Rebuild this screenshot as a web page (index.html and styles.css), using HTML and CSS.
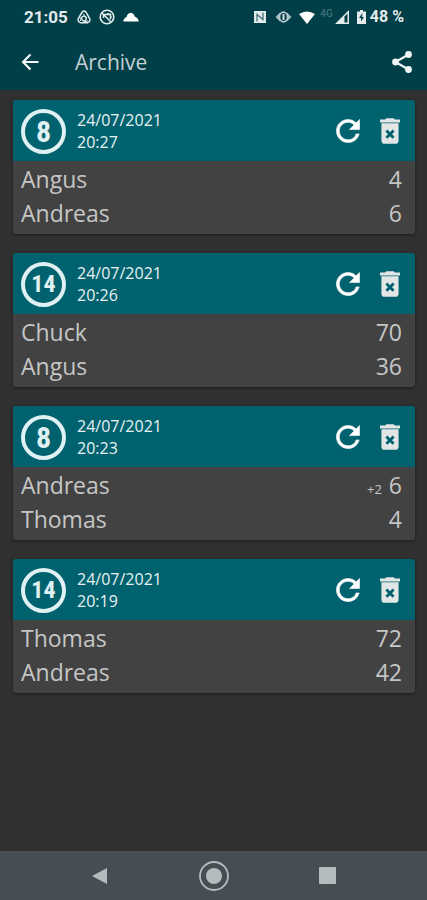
FILE: index.html
```html
<!DOCTYPE html>
<html lang="en">
<head>
<meta charset="utf-8">
<meta name="viewport" content="width=device-width, initial-scale=1">
<title>Archive</title>
<link rel="stylesheet" href="styles.css">
</head>
<body>
<svg class="defs" aria-hidden="true">
  <symbol id="refresh" viewBox="3.700 3.700 16.600 16.600"><path d="M17.650 6.350A7.958 7.958 0 0 0 12 4c-4.420 0-7.990 3.580-7.990 8s3.570 8 7.990 8c3.730 0 6.840-2.550 7.730-6h-2.080A5.990 5.990 0 0 1 12 18c-3.310 0-6-2.690-6-6s2.690-6 6-6c1.660 0 3.140.69 4.220 1.780L13 11h7V4z" fill="currentColor" stroke="currentColor" stroke-width=".4"/></symbol>
  <symbol id="trash" viewBox="5 3 14 18"><path d="M6 19c0 1.100.9 2 2 2h8c1.100 0 2-.9 2-2V6.500H6zm2.800-6.600 1.410-1.410L12 12.790l1.790-1.800 1.410 1.410-1.790 1.800 1.790 1.790-1.410 1.410L12 15.610l-1.790 1.790-1.410-1.410 1.790-1.790zM15.500 4l-1-1h-5l-1 1H5v2h14V4z" fill="currentColor"/></symbol>
</svg>
<header class="top">
  <div class="status">
    <span class="clock">21:05</span>
    <svg width="14" height="14" viewBox="0 0 14 14"><path d="M5 2.200Q7 0 9 2.200L12.400 8Q14 11.500 10.500 12.700H3.500Q0 11.500 1.600 8z" fill="none" stroke="currentColor" stroke-width="1.500"/><circle cx="7" cy="8.500" r="2.300" fill="none" stroke="currentColor" stroke-width="1.300"/><path d="M6 3.500 9.500 9M4 7l-.5 4M6 12l5-1" stroke="currentColor"/></svg>
    <svg width="16" height="16" viewBox="0 0 16 16"><circle cx="8" cy="8" r="6.800" fill="none" stroke="currentColor" stroke-width="1.600"/><path d="M3 4 12 13M4.500 9V5.500H11.500V9M8 5a3 3 0 0 1 3 5" fill="none" stroke="currentColor" stroke-width="1.500"/></svg>
    <svg class="cloud" width="16" height="10" viewBox="0 0 16 10"><path d="M.3 9.500Q.5 6 3.500 5 4.500 1.200 7.500.8q3 0 4.300 3.700Q15.500 6 15.700 9.500z" fill="#fff"/></svg>
    <span class="spacer"></span>
    <svg class="nfc" width="14" height="14" viewBox="0 0 14 14"><path d="M1 1h12v12H1z" fill="currentColor"/><path d="M4 11.500V4.500l6 5V2.500" fill="none" stroke="#46747b" stroke-width="1.300"/></svg>
    <svg class="eye" width="17" height="12" viewBox="0 0 17 12"><path d="M.5 6 5 1.500v9zM16.500 6 12 1.500v9z" fill="#a5bcc3"/><ellipse cx="8.500" cy="6" rx="4" ry="4.900" fill="none" stroke="#b9cbd0" stroke-width="1.600"/><path d="M8.500 3v6" stroke="#d5dfe2" stroke-width="2"/></svg>
    <svg class="wifi" width="16" height="13" viewBox="0 0 16 13"><path d="M0 3Q8-2 16 3L8 13z" fill="currentColor"/></svg>
    <span class="network">4G</span>
    <svg class="signal" width="14" height="14" viewBox="0 0 14 14"><path d="M0 14 14 0v14z" fill="currentColor"/><path d="M9.500 6.500 12.500 3.500v9h-3z" fill="#003f47"/></svg>
    <svg class="battery" width="9" height="14" viewBox="0 0 9 14"><path d="M3 0h3v1.500h3V14H0V1.500h3z" fill="currentColor"/><path d="M5.500 3 2 8h2v3.500L7 7H5z" fill="#003f47"/></svg>
    <span class="percent">48 %</span>
  </div>
  <div class="bar">
    <button class="icon" aria-label="Back"><svg width="18" height="18" viewBox="0 0 18 18"><path d="M17.500 9H2M9.500 1.500 2 9l7.500 7.500" fill="none" stroke="currentColor" stroke-width="2.200"/></svg></button>
    <h1>Archive</h1>
    <button class="icon" aria-label="Share"><svg width="20" height="22" viewBox="0 0 20 22"><path d="M16.500 3.500 3.500 11l13 7.500" fill="none" stroke="currentColor" stroke-width="2.200"/><g fill="currentColor"><circle cx="16.500" cy="3.500" r="3.400"/><circle cx="3.500" cy="11" r="3.400"/><circle cx="16.500" cy="18.500" r="3.400"/></g></svg></button>
  </div>
</header>
<main>
  <article class="card">
    <div class="head"><span class="ring">8</span><time>24/07/2021<br>20:27</time><button class="icon" aria-label="Restart"><svg width="24" height="24"><use href="#refresh"/></svg></button><button class="icon del" aria-label="Delete"><svg width="20" height="26"><use href="#trash"/></svg></button></div>
    <dl><div><dt>Angus</dt><dd>4</dd></div><div><dt>Andreas</dt><dd>6</dd></div></dl>
  </article>
  <article class="card">
    <div class="head"><span class="ring two">14</span><time>24/07/2021<br>20:26</time><button class="icon" aria-label="Restart"><svg width="24" height="24"><use href="#refresh"/></svg></button><button class="icon del" aria-label="Delete"><svg width="20" height="26"><use href="#trash"/></svg></button></div>
    <dl><div><dt>Chuck</dt><dd>70</dd></div><div><dt>Angus</dt><dd>36</dd></div></dl>
  </article>
  <article class="card">
    <div class="head"><span class="ring">8</span><time>24/07/2021<br>20:23</time><button class="icon" aria-label="Restart"><svg width="24" height="24"><use href="#refresh"/></svg></button><button class="icon del" aria-label="Delete"><svg width="20" height="26"><use href="#trash"/></svg></button></div>
    <dl><div><dt>Andreas</dt><dd><small>+2</small>6</dd></div><div><dt>Thomas</dt><dd>4</dd></div></dl>
  </article>
  <article class="card">
    <div class="head"><span class="ring two">14</span><time>24/07/2021<br>20:19</time><button class="icon" aria-label="Restart"><svg width="24" height="24"><use href="#refresh"/></svg></button><button class="icon del" aria-label="Delete"><svg width="20" height="26"><use href="#trash"/></svg></button></div>
    <dl><div><dt>Thomas</dt><dd>72</dd></div><div><dt>Andreas</dt><dd>42</dd></div></dl>
  </article>
</main>
<nav>
  <button class="icon" aria-label="Back"><svg width="16" height="18" viewBox="0 0 16 18"><path d="M0 9 15 1v16z" fill="currentColor"/></svg></button>
  <button class="icon" aria-label="Home"><svg width="30" height="30" viewBox="0 0 30 30"><circle cx="15" cy="15" r="14" fill="none" stroke="currentColor" stroke-width="1.800"/><circle cx="15" cy="15" r="8" fill="currentColor"/></svg></button>
  <button class="icon" aria-label="Recent apps"><svg width="17" height="17" viewBox="0 0 17 17"><rect width="17" height="17" rx="1" fill="currentColor"/></svg></button>
</nav>
</body>
</html>
```
FILE: styles.css
```css
* { box-sizing: border-box; }

body {
  margin: 0;
  min-height: 100vh;
  display: flex;
  flex-direction: column;
  background: #303030;
  color: #c6c6c6;
  font-family: "Open Sans", "Noto Sans", sans-serif;
}

.defs { position: absolute; width: 0; height: 0; }
svg { display: block; flex: none; }

.icon {
  display: flex;
  padding: 0;
  border: 0;
  background: none;
  color: inherit;
}

.top { background: #003f47; color: #f2f6f6; }

.status {
  display: flex;
  align-items: center;
  height: 34px;
  padding: 0 23px 0 24px;
  font: 500 16px/34px Roboto, sans-serif;
  color: #e4ebec;
}
.clock { margin-right: 9px; font-weight: 700; font-size: 17px; }
.status svg + svg { margin-left: 8px; }
.spacer { flex: 1; }
.status .wifi { margin-left: 7px; color: #fff; }
.network { margin: 0 2px 0 5px; font-size: 10px; line-height: 28px; align-self: flex-start; color: #42717a; }
.percent { margin-left: 4px; font-weight: 700; }

.bar {
  display: flex;
  align-items: center;
  height: 56px;
  padding: 0 15px 0 21px;
}
h1 {
  flex: 1;
  margin: 0 0 0 36px;
  font-size: 21px;
  font-weight: 400;
  line-height: 28px;
  color: #c3d1d4;
}

main {
  flex: 1;
  display: flex;
  flex-direction: column;
  gap: 19px;
  padding: 10px 12px 20px 13px;
}

.card {
  background: #424242;
  border-radius: 3px;
  overflow: hidden;
  box-shadow: 0 1px 3px #1c1c1c;
}
.head {
  display: flex;
  align-items: center;
  height: 61px;
  padding: 1px 15px 0 8px;
  background: #00626e;
  color: #fff;
}
.ring {
  width: 45px;
  height: 45px;
  border: 4px solid #e0f1f4;
  border-radius: 50%;
  color: #e0f1f4;
  font: 700 30px/37px "Roboto Condensed", Roboto, sans-serif;
  text-align: center;
}
.two { font-size: 24px; }
time {
  flex: 1;
  margin-left: 11px;
  font-size: 16px;
  line-height: 22px;
  color: #e8f2f3;
}
.del { margin-left: 20px; color: #e3e6e6; }

dl { margin: 0; padding: 1px 13px 4px 8px; }
dl div { display: flex; justify-content: space-between; }
dt, dd { margin: 0; font-size: 23px; line-height: 34px; }
small { margin-right: 7px; font-size: 13px; line-height: 1; }

nav {
  display: grid;
  grid-template-columns: repeat(3, 114px);
  justify-content: center;
  justify-items: center;
  align-items: center;
  height: 49px;
  background: #454e53;
  color: #b4bcbd;
}
```
